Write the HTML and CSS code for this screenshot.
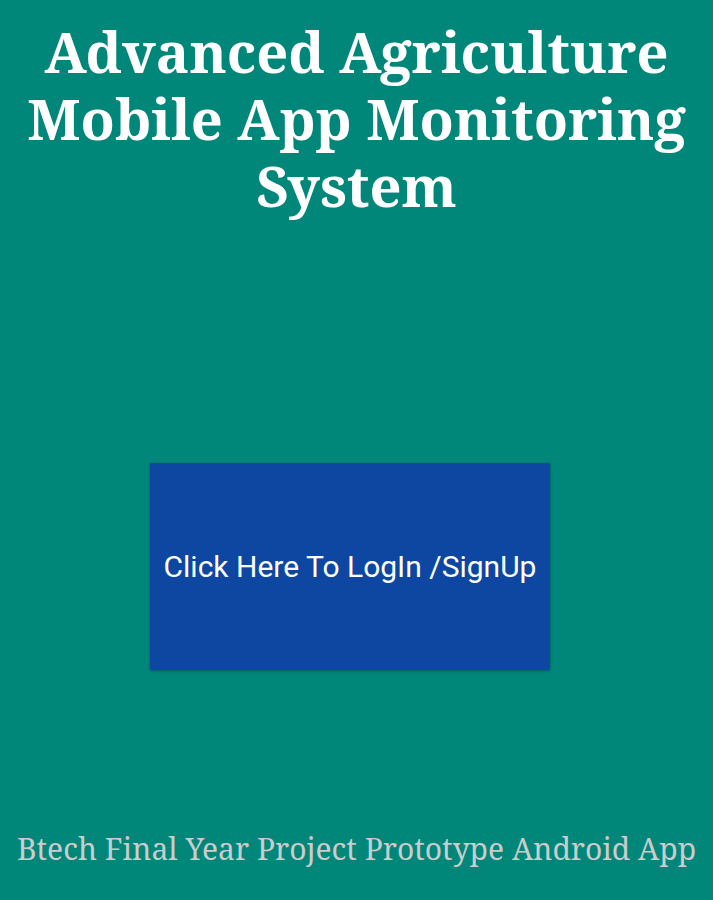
FILE: index.html
```
<!DOCTYPE html>
<html>
<head>
<meta charset="utf-8">
<link rel="stylesheet" href="styles.css">
</head>
<body>
<div class="screen">
  <h1 class="title">Advanced Agriculture Mobile App Monitoring System</h1>
  <div class="middle">
    <button class="login">Click Here To LogIn /SignUp</button>
  </div>
  <p class="footer">Btech Final Year Project Prototype Android App</p>
</div>
</body>
</html>
```
FILE: styles.css
```
html, body {
  margin: 0;
  padding: 0;
  background: #00877a;
}
.screen {
  width: 713px;
  height: 900px;
  display: flex;
  flex-direction: column;
  align-items: center;
  box-sizing: border-box;
}
.title {
  margin: 18px 0 0;
  font-family: "Noto Serif", "DejaVu Serif", serif;
  font-weight: bold;
  font-size: 56px;
  line-height: 67px;
  color: #ffffff;
  text-align: center;
}
.middle {
  flex: 1;
  display: flex;
  align-items: flex-start;
  padding-top: 244px;
  margin-right: 13px;
}
.login {
  width: 400px;
  height: 207px;
  background: #0d47a1;
  color: #ffffff;
  border: none;
  font-family: "Roboto", sans-serif;
  font-size: 30px;
  box-shadow: 0 1px 3px rgba(0,0,0,0.3);
  padding: 0;
}
.footer {
  margin: 0 0 31px;
  font-family: "Noto Serif", "DejaVu Serif", serif;
  font-size: 30px;
  color: #cccccc;
  text-align: center;
}
```
